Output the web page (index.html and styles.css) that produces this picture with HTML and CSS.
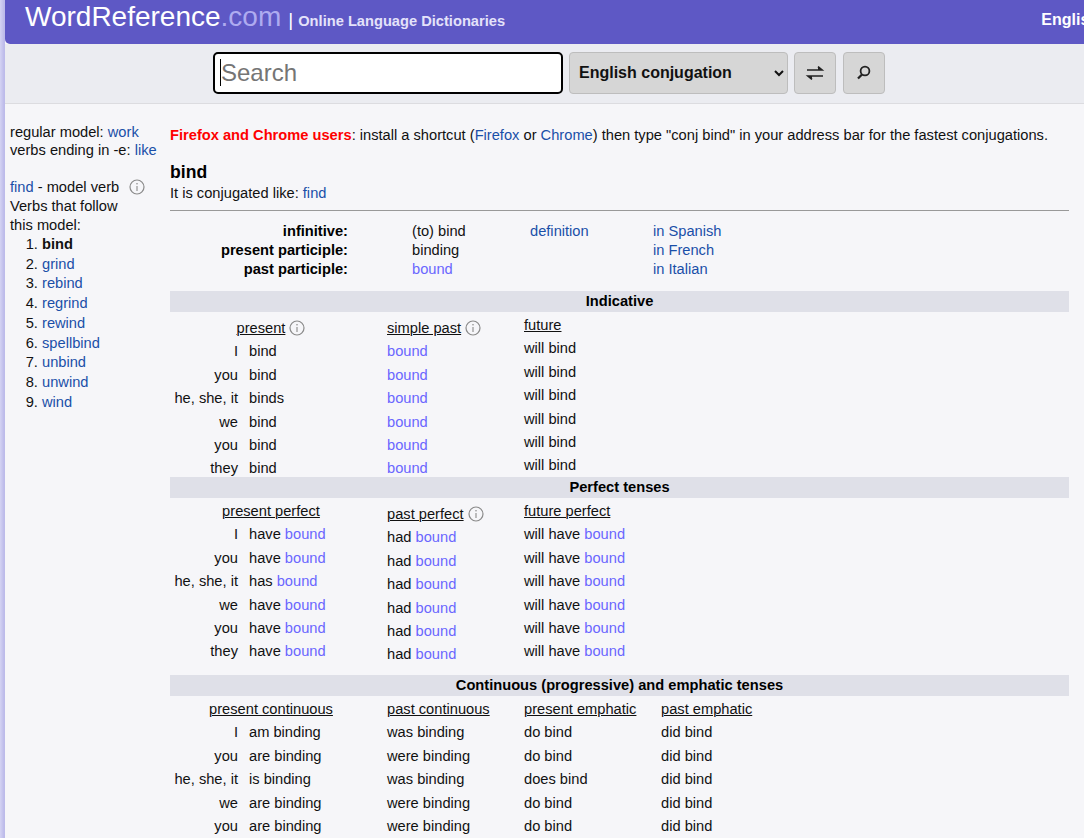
FILE: index.html
```html
<!DOCTYPE html>
<html lang="en">
<head>
<meta charset="utf-8">
<title>bind - English Verb Conjugator - WordReference.com</title>
<link rel="stylesheet" href="styles.css">
</head>
<body>
<svg class="defs" width="0" height="0" aria-hidden="true">
  <symbol id="info" viewBox="0 0 16 16">
    <circle cx="8" cy="8" r="7" fill="none" stroke="#8a8a8a" stroke-width="1.2"/>
    <path d="M8 7v5" stroke="#8a8a8a" stroke-width="1.1" fill="none"/>
    <circle cx="8" cy="4.8" r=".8" fill="#8a8a8a"/>
  </symbol>
</svg>
<header class="topbar">
  <div class="brand"><span class="logo">WordReference<span class="logo-tld">.com</span></span><span class="pipe">|</span><span class="tagline">Online Language Dictionaries</span></div>
  <div class="product">English Verb Conjugator</div>
</header>
<form class="searchbar">
  <div class="searchfield"><input class="searchinput" type="text" placeholder="Search"><span class="caret"></span></div>
  <select class="dict"><option>English conjugation</option></select>
  <button class="iconbtn" type="button" aria-label="Reverse">
    <svg width="20" height="20" viewBox="0 0 20 20"><path d="M2 7h15M13 3.6 17 7l-4 0M18 13H3M7 16.4 3 13l4 0" fill="none" stroke="#222" stroke-width="1.7"/><path d="M13 3.5 17.3 7H13zM7 16.5 2.7 13H7z" fill="#222"/></svg>
  </button>
  <button class="iconbtn" type="button" aria-label="Search">
    <svg width="20" height="20" viewBox="0 0 20 20"><circle cx="11" cy="8" r="4.4" fill="none" stroke="#222" stroke-width="1.8"/><path d="M8 11.4 4 15.6" stroke="#222" stroke-width="2.2" fill="none"/></svg>
  </button>
</form>
<div class="page">
  <aside class="side">
    <p class="side-intro">regular model: <a href="#">work</a><br>verbs ending in -e: <a href="#">like</a></p>
    <div class="side-model">
      <div class="side-line"><a href="#">find</a> - model verb <svg class="info side-info"><use href="#info"/></svg></div>
      <div class="side-line">Verbs that follow</div>
      <div class="side-line">this model:</div>
      <ol class="models">
        <li><b>bind</b></li>
        <li><a href="#">grind</a></li>
        <li><a href="#">rebind</a></li>
        <li><a href="#">regrind</a></li>
        <li><a href="#">rewind</a></li>
        <li><a href="#">spellbind</a></li>
        <li><a href="#">unbind</a></li>
        <li><a href="#">unwind</a></li>
        <li><a href="#">wind</a></li>
      </ol>
    </div>
  </aside>
  <main class="main">
    <p class="notice"><b class="alert">Firefox and Chrome users</b>: install a shortcut (<a href="#">Firefox</a> or <a href="#">Chrome</a>) then type "conj bind" in your address bar for the fastest conjugations.</p>
    <h1 class="verb">bind</h1>
    <p class="like">It is conjugated like: <a href="#">find</a></p>
    <hr class="rule">
    <div class="forms">
      <b class="form-label">infinitive:</b><span>(to) bind</span><a href="#">definition</a><a href="#">in Spanish</a>
      <b class="form-label">present participle:</b><span>binding</span><span></span><a href="#">in French</a>
      <b class="form-label">past participle:</b><span class="irr">bound</span><span></span><a href="#">in Italian</a>
    </div>

    <section class="mood">
      <h2 class="band">Indicative</h2>
      <div class="tenses">
        <div class="tense tense-first tense-info">
          <div class="head"><u>present</u> <svg class="info"><use href="#info"/></svg></div>
          <div class="conj"><span class="pron">I</span><span>bind</span></div>
          <div class="conj"><span class="pron">you</span><span>bind</span></div>
          <div class="conj"><span class="pron">he, she, it</span><span>binds</span></div>
          <div class="conj"><span class="pron">we</span><span>bind</span></div>
          <div class="conj"><span class="pron">you</span><span>bind</span></div>
          <div class="conj"><span class="pron">they</span><span>bind</span></div>
        </div>
        <div class="tense tense-info">
          <div class="head"><u>simple past</u> <svg class="info"><use href="#info"/></svg></div>
          <div class="irr">bound</div><div class="irr">bound</div><div class="irr">bound</div><div class="irr">bound</div><div class="irr">bound</div><div class="irr">bound</div>
        </div>
        <div class="tense">
          <div class="head"><u>future</u></div>
          <div>will bind</div><div>will bind</div><div>will bind</div><div>will bind</div><div>will bind</div><div>will bind</div>
        </div>
      </div>
    </section>

    <section class="mood">
      <h2 class="band">Perfect tenses</h2>
      <div class="tenses">
        <div class="tense tense-first">
          <div class="head"><u>present perfect</u></div>
          <div class="conj"><span class="pron">I</span><span>have <span class="irr">bound</span></span></div>
          <div class="conj"><span class="pron">you</span><span>have <span class="irr">bound</span></span></div>
          <div class="conj"><span class="pron">he, she, it</span><span>has <span class="irr">bound</span></span></div>
          <div class="conj"><span class="pron">we</span><span>have <span class="irr">bound</span></span></div>
          <div class="conj"><span class="pron">you</span><span>have <span class="irr">bound</span></span></div>
          <div class="conj"><span class="pron">they</span><span>have <span class="irr">bound</span></span></div>
        </div>
        <div class="tense tense-info">
          <div class="head"><u>past perfect</u> <svg class="info"><use href="#info"/></svg></div>
          <div>had <span class="irr">bound</span></div><div>had <span class="irr">bound</span></div><div>had <span class="irr">bound</span></div><div>had <span class="irr">bound</span></div><div>had <span class="irr">bound</span></div><div>had <span class="irr">bound</span></div>
        </div>
        <div class="tense">
          <div class="head"><u>future perfect</u></div>
          <div>will have <span class="irr">bound</span></div><div>will have <span class="irr">bound</span></div><div>will have <span class="irr">bound</span></div><div>will have <span class="irr">bound</span></div><div>will have <span class="irr">bound</span></div><div>will have <span class="irr">bound</span></div>
        </div>
      </div>
    </section>

    <section class="mood">
      <h2 class="band">Continuous (progressive) and emphatic tenses</h2>
      <div class="tenses">
        <div class="tense tense-first">
          <div class="head"><u>present continuous</u></div>
          <div class="conj"><span class="pron">I</span><span>am binding</span></div>
          <div class="conj"><span class="pron">you</span><span>are binding</span></div>
          <div class="conj"><span class="pron">he, she, it</span><span>is binding</span></div>
          <div class="conj"><span class="pron">we</span><span>are binding</span></div>
          <div class="conj"><span class="pron">you</span><span>are binding</span></div>
          <div class="conj"><span class="pron">they</span><span>are binding</span></div>
        </div>
        <div class="tense">
          <div class="head"><u>past continuous</u></div>
          <div>was binding</div><div>were binding</div><div>was binding</div><div>were binding</div><div>were binding</div><div>were binding</div>
        </div>
        <div class="tense">
          <div class="head"><u>present emphatic</u></div>
          <div>do bind</div><div>do bind</div><div>does bind</div><div>do bind</div><div>do bind</div><div>do bind</div>
        </div>
        <div class="tense">
          <div class="head"><u>past emphatic</u></div>
          <div>did bind</div><div>did bind</div><div>did bind</div><div>did bind</div><div>did bind</div><div>did bind</div>
        </div>
      </div>
    </section>
  </main>
</div>
</body>
</html>
```
FILE: styles.css
```css
* { box-sizing: border-box; }
html, body { height: 838px; overflow: hidden; }
body {
  margin: 0;
  padding-left: 5px;
  background: linear-gradient(90deg, #d4d3f3 0, #bdbbea 4px, #bdbbea 5px, transparent 5px) , #f6f6f9;
  font-family: "Liberation Sans", Arial, sans-serif;
  font-size: 14.67px;
  color: #111;
}
a { color: #1a4fa8; text-decoration: none; }
p { margin: 0; }
.defs { position: absolute; }

.topbar {
  display: flex;
  justify-content: space-between;
  align-items: flex-start;
  width: 1245px;
  height: 44px;
  padding: 0 22px 0 20px;
  background: #5e58c5;
  border-bottom-left-radius: 5px;
  color: #fff;
  white-space: nowrap;
}
.brand { display: flex; align-items: baseline; height: 34px; }
.logo { font-size: 28px; line-height: 34px; color: #fff; }
.logo-tld { color: #aeabf0; }
.pipe { margin: 0 5px 0 7px; font-size: 19px; }
.tagline { font-weight: bold; font-size: 14.67px; color: #e4e2fa; }
.product { font-size: 16px; font-weight: bold; line-height: 40px; }

.searchbar {
  display: flex;
  justify-content: center;
  align-items: center;
  gap: 6px;
  width: 1079px;
  height: 60px;
  padding: 0 0 2px 9px;
  background: #ebecf1;
  border-bottom: 1px solid #dcdce0;
}
.searchfield { position: relative; }
.searchinput {
  display: block;
  width: 350px;
  height: 42px;
  padding: 0 6px;
  border: 2px solid #000;
  border-radius: 5px;
  background: #fff;
  font-family: inherit;
  font-size: 24px;
  outline: none;
}
.searchinput::placeholder { color: #757575; }
.caret {
  position: absolute;
  left: 7px;
  top: 7px;
  width: 1px;
  height: 27px;
  background: #000;
}
.dict {
  width: 219px;
  height: 42px;
  padding: 0 5px;
  background-color: #d6d6d6;
  border: 1px solid #bdbdbd;
  border-radius: 4px;
  font-family: inherit;
  font-size: 16px;
  font-weight: bold;
  color: #111;
}
.iconbtn {
  display: flex;
  align-items: center;
  justify-content: center;
  width: 42px;
  height: 42px;
  padding: 0;
  background: #d6d6d6;
  border: 1px solid #bdbdbd;
  border-radius: 4px;
}
.iconbtn + .iconbtn { margin-left: 1px; }

.page { display: flex; }
.side { flex: 0 0 165px; padding: 19px 0 0 5px; white-space: nowrap; }
.side-intro { line-height: 18px; }
.side-model { margin-top: 19px; }
.side-line { line-height: 19px; }
.info { display: inline-block; width: 16px; height: 16px; vertical-align: -3px; }
.side-info { margin-left: 6px; }
.models { margin: 0; padding-left: 32px; }
.models li { line-height: 19.7px; }

.main { flex: 0 0 899px; padding-top: 22px; }
.alert { color: #f00; }
.notice { line-height: 18px; white-space: nowrap; }
.verb { margin: 17px 0 0; font-size: 17.6px; line-height: 22px; font-weight: bold; color: #000; }
.like { margin-top: 1px; line-height: 18px; }
.rule { margin: 8px 0 0; height: 1px; border: 0; background: #999; }
.forms {
  display: grid;
  grid-template-columns: 242px 118px 123px 1fr;
  margin-top: 11px;
  line-height: 19px;
}
.form-label { padding-right: 64px; text-align: right; color: #000; }
.irr { color: #6a66ff; }

.mood { margin-top: 12px; height: 186px; }
.mood + .mood { margin-top: 0; height: 198px; }
.band {
  margin: 0;
  height: 21px;
  background: #dfe0e8;
  font-size: 14.67px;
  line-height: 21px;
  font-weight: bold;
  text-align: center;
  color: #000;
}
.tenses { display: flex; }
.tense { flex: 0 0 137px; padding-top: 1.3px; line-height: 23.4px; }
.tense-first { flex-basis: 217px; }
.tense-info { padding-top: 4.3px; }
.head { height: 24px; line-height: 24px; }
.head u { text-decoration-thickness: 1px; }
.tense-first .head { width: 202px; text-align: center; }
.conj { display: grid; grid-template-columns: 68px 1fr; column-gap: 11px; }
.pron { text-align: right; white-space: nowrap; }
```
